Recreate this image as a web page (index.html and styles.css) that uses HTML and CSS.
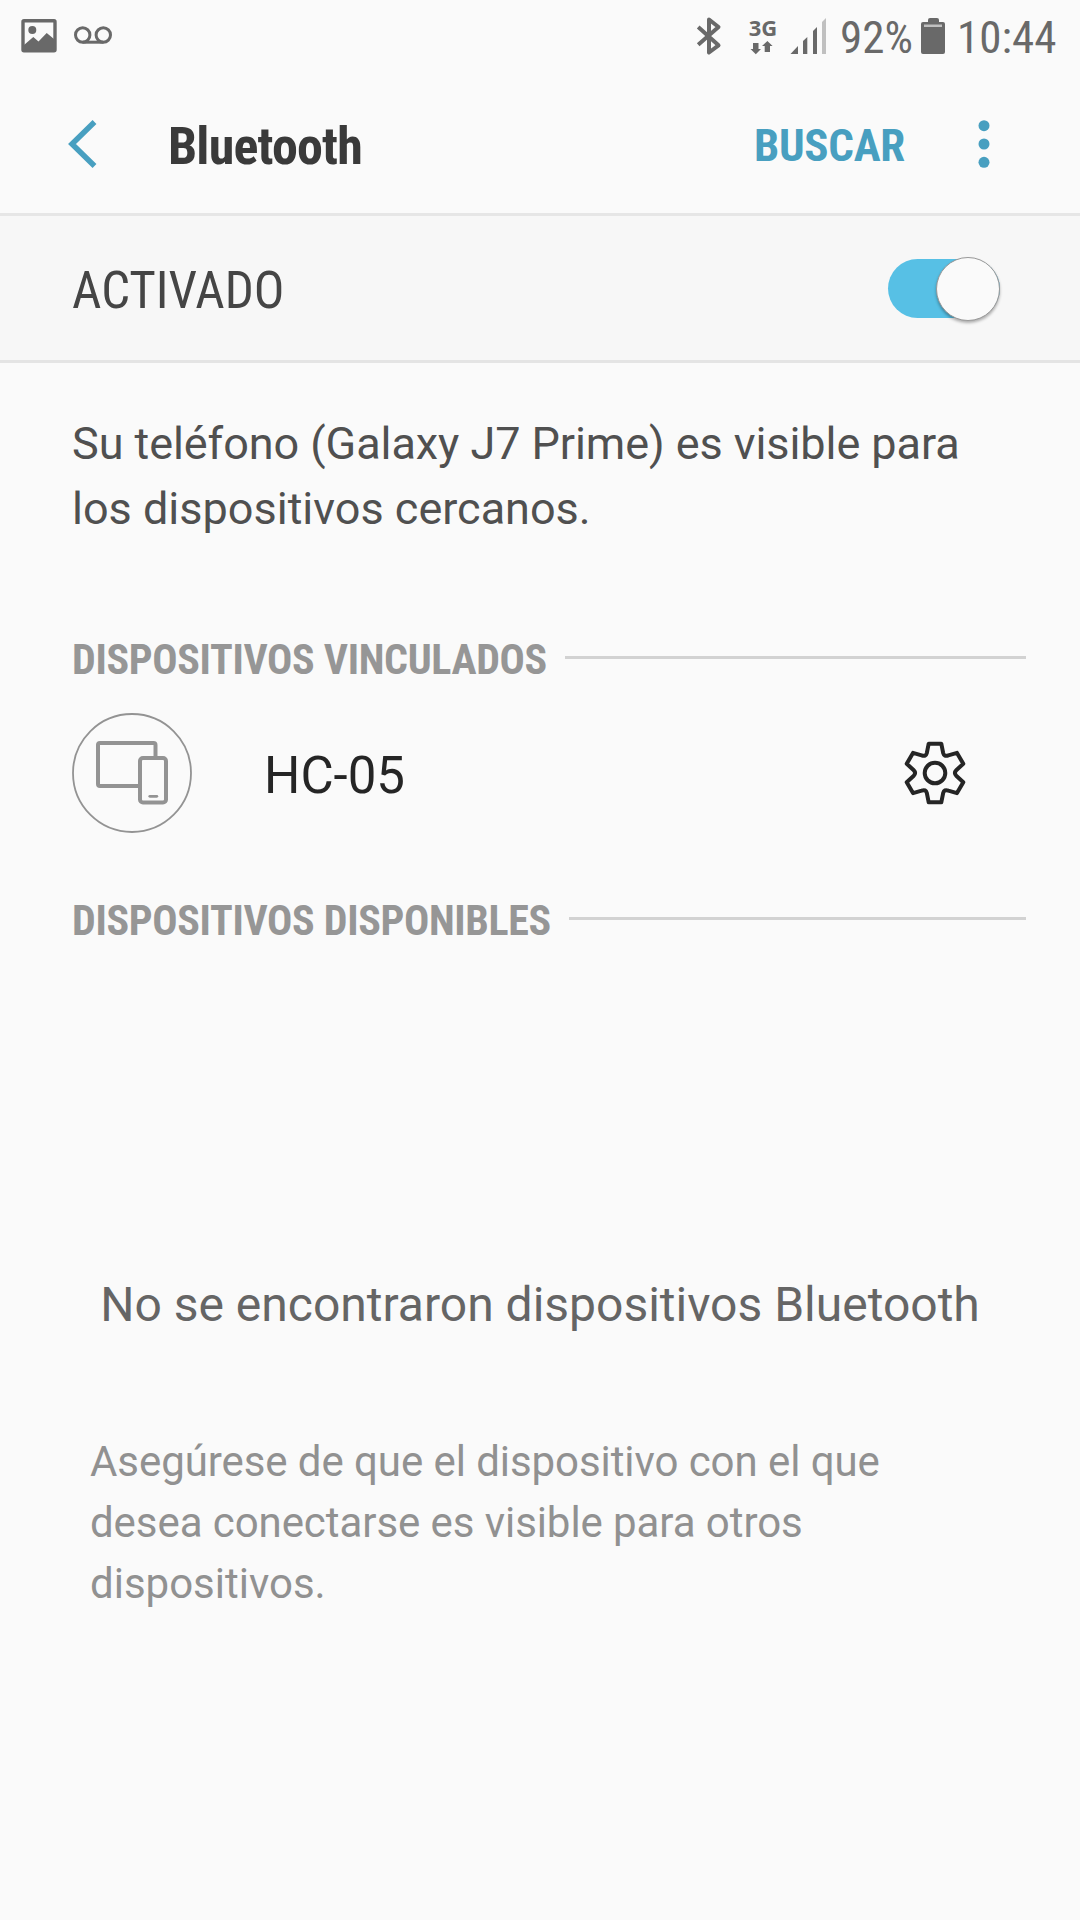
FILE: index.html
```html
<!DOCTYPE html>
<html lang="es">
<head>
<meta charset="utf-8">
<title>Bluetooth</title>
<link rel="stylesheet" href="styles.css">
</head>
<body>
<div class="screen">
  <div class="status">
    <svg class="notices" viewBox="0 0 120 70">
      <rect x="23" y="20.7" width="32" height="30" rx="1" fill="none" stroke="#696969" stroke-width="3.4"/>
      <circle cx="32.3" cy="30" r="4"/>
      <path d="M24 45 L33.3 37 L38.5 41.5 L46.7 33 L54 39 V51 H24 Z"/>
      <g fill="none" stroke="#696969" stroke-width="3">
        <circle cx="82.7" cy="35" r="7.2"/><circle cx="103.3" cy="35" r="7.2"/><path d="M82.7 42.2 H103.3"/>
      </g>
    </svg>
    <svg class="radios" viewBox="690 0 140 70">
      <path d="M698.2 27 L718.5 45.3 L709 52.5 V19.5 L718.5 27 L698.2 44.8" fill="none" stroke="#696969" stroke-width="4" stroke-linejoin="round"/>
      <text class="network" x="748.7" y="36">3G</text>
      <path d="M753 43 H758.500 V49 H761 L755.800 54.300 L750.500 49 H753 Z M764.700 52 V46 H762 L767.400 41 L772.600 46 H770 V52 Z"/>
      <path d="M790.500 54 L798 46 V54 Z M803 54 V41 L807.300 37 V54 Z M813 54 V31 L817 27 V54 Z"/>
      <path d="M822 54 V22 L826 18 V54 Z" fill="#c0c0c0"/>
    </svg>
    <span class="percent">92%</span>
    <svg class="battery" viewBox="920 0 26 70">
      <path d="M928 22 V20 Q928 18 930 18 H937 Q939 18 939 20 V22 H943 Q945 22 945 24 V52 Q945 54 943 54 H923 Q921 54 921 52 V24 Q921 22 923 22 Z"/>
      <path d="M924 24.500 H942 V27 H924 Z" fill="#c0c0c0"/>
    </svg>
    <span class="clock">10:44</span>
  </div>
  <header class="appbar">
    <svg class="back" viewBox="0 0 34 50"><path d="M29.500 3 L7 25 L29.500 47"/></svg>
    <h1 class="title">Bluetooth</h1>
    <span class="scan">BUSCAR</span>
    <svg class="more" viewBox="0 0 12 50"><circle cx="6" cy="6.700" r="5.500"/><circle cx="6" cy="25" r="5.500"/><circle cx="6" cy="43.300" r="5.500"/></svg>
  </header>
  <div class="master">
    <span class="state">ACTIVADO</span>
    <div class="switch"><div class="knob"></div></div>
  </div>
  <p class="about"><span class="tight">Su teléfono (Galaxy J7 Prime) es visible para</span><br>los dispositivos cercanos.</p>
  <div class="section"><h2 class="label">DISPOSITIVOS VINCULADOS</h2><div class="rule"></div></div>
  <div class="device">
    <svg class="kind" viewBox="-60 -60 120 120">
      <circle r="59" stroke-width="1.800"/>
      <path d="M8 13 H-32 Q-34 13 -34 11 V-28 Q-34 -30 -32 -30 H21.500 Q23.500 -30 23.500 -28 V-15" stroke-width="4"/>
      <rect x="8" y="-15" width="26" height="44.500" rx="3" stroke-width="4"/>
      <path d="M17.800 23.300 H24.800" stroke-width="2.800" stroke-linecap="round"/>
    </svg>
    <span class="name">HC-05</span>
    <svg class="gear" viewBox="-33 -33 66 66">
      <path d="M-6.300 -29.300 H6.300 L8.150 -20.100 Q9.250 -16 13.350 -17.600 L22 -20.100 L28.300 -9.200 L21.500 -3 Q18.500 0 21.500 3 L28.300 9.200 L22 20.100 L13.350 17.600 Q9.250 16 8.150 20.100 L6.300 29.300 H-6.300 L-8.150 20.100 Q-9.250 16 -13.350 17.600 L-22 20.100 L-28.300 9.200 L-21.500 3 Q-18.500 0 -21.500 -3 L-28.300 -9.200 L-22 -20.100 L-13.350 -17.600 Q-9.250 -16 -8.150 -20.100 Z"/>
      <circle r="10.300"/>
    </svg>
  </div>
  <div class="section"><h2 class="label">DISPOSITIVOS DISPONIBLES</h2><div class="rule"></div></div>
  <div class="empty">
    <p class="none">No se encontraron dispositivos Bluetooth</p>
    <p class="hint"><span class="tight">Asegúrese de que el dispositivo con el que<br>desea conectarse es visible para otros</span><br>dispositivos.</p>
  </div>
</div>
</body>
</html>
```
FILE: styles.css
```css
* { box-sizing: border-box; margin: 0; padding: 0; }
body { background: #fafafa; font-family: Roboto, "Liberation Sans", sans-serif; }
svg { display: block; flex: none; }
.screen { width: 1080px; height: 1920px; overflow: hidden; white-space: nowrap; }
.status { display: flex; height: 70px; color: #696969; }
.status svg { height: 70px; fill: #696969; }
.notices { width: 120px; }
.radios { width: 140px; margin-left: 570px; }
.network { font: bold 22px "Open Sans", sans-serif; }
.percent, .clock, .title, .scan, .state, .label { font-family: "Roboto Condensed", Roboto, sans-serif; font-stretch: condensed; }
.percent, .clock { font-size: 45px; line-height: 76px; flex: none; }
.percent { width: 80px; margin-left: 10px; }
.battery { width: 26px; }
.clock { margin-left: 11px; }
.appbar { display: flex; align-items: center; height: 146px; padding-top: 5px; border-bottom: 3px solid #e6e6e6; }
.back { width: 34px; height: 50px; margin-left: 65px; fill: none; stroke: #489fc0; stroke-width: 5.5; }
.title { width: 586px; margin-left: 69px; font-size: 52px; line-height: 60px; font-weight: 700; letter-spacing: -.8px; color: #3a3a3a; padding-top: 6px; }
.scan { width: 224px; font-size: 45px; line-height: 60px; font-weight: 700; letter-spacing: -.3px; color: #489fc0; padding-top: 4px; }
.more { width: 12px; height: 50px; fill: #489fc0; }
.master { display: flex; align-items: center; justify-content: space-between; height: 147px; padding: 0 80px 0 72px; background: #f7f7f7; border-bottom: 3px solid #e4e4e4; }
.state { font-size: 51px; line-height: 60px; color: #454545; padding-top: 6px; }
.switch { display: flex; align-items: center; justify-content: flex-end; width: 112px; height: 59px; border-radius: 30px; background: #57c0e5; margin-top: 1px; }
.knob { flex: none; width: 64px; height: 64px; border-radius: 50%; background: #fafafa; border: 1px solid #999; box-shadow: 0 2px 3px rgba(0,0,0,.3); }
.about { margin-top: 48px; padding-left: 72px; font-size: 45px; line-height: 65px; color: #505050; }
.tight { letter-spacing: -.07px; }
.section { display: flex; align-items: center; height: 50px; padding: 0 54px 0 72px; }
.about + .section { margin-top: 93px; }
.label { font-size: 42px; line-height: 50px; font-weight: 700; letter-spacing: -.34px; color: #969696; padding-top: 2px; }
.rule { flex: 1; height: 3px; margin: 0 0 3px 18px; background: #d2d2d2; }
.device { display: flex; align-items: center; height: 120px; margin-top: 29px; padding: 0 112px 0 72px; }
.kind { width: 120px; height: 120px; fill: none; stroke: #939393; }
.name { flex: 1; margin-left: 72px; font-size: 51px; line-height: 60px; color: #252525; padding-top: 6px; }
.gear { width: 66px; height: 66px; fill: none; stroke: #252525; stroke-width: 4; stroke-linejoin: round; }
.device + .section { margin-top: 62px; }
.empty { padding-top: 330px; }
.none { text-align: center; font-size: 48px; line-height: 60px; color: #656565; }
.hint { margin-top: 96px; padding-left: 90px; font-size: 42px; line-height: 61px; color: #919191; }
```
